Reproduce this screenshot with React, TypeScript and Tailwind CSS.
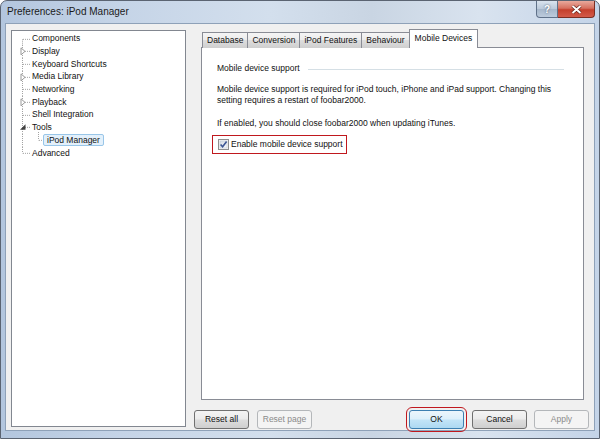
import React from 'react';

type TreeItem = {
  label: string;
  exp?: 'closed' | 'open';
  child?: boolean;
  selected?: boolean;
};

const treeItems: TreeItem[] = [
  { label: 'Components' },
  { label: 'Display', exp: 'closed' },
  { label: 'Keyboard Shortcuts' },
  { label: 'Media Library', exp: 'closed' },
  { label: 'Networking' },
  { label: 'Playback', exp: 'closed' },
  { label: 'Shell Integration' },
  { label: 'Tools', exp: 'open' },
  { label: 'iPod Manager', child: true, selected: true },
  { label: 'Advanced' },
];

const tabs = ['Database', 'Conversion', 'iPod Features', 'Behaviour', 'Mobile Devices'];

const TreeGutter = ({ item, first, last }: { item: TreeItem; first: boolean; last: boolean }) => {
  const h = 12.7;
  const mid = h / 2;
  const w = item.child ? 34 : 20;
  return (
    <svg width={w} height={h} className="shrink-0 overflow-visible">
      <line
        x1={10.5}
        y1={first ? mid : 0}
        x2={10.5}
        y2={last ? mid : h}
        stroke="#a3a3a3"
        strokeWidth={1}
        strokeDasharray="1 1"
      />
      {item.child ? (
        <>
          <line x1={26.5} y1={-2} x2={26.5} y2={mid} stroke="#a3a3a3" strokeDasharray="1 1" />
          <line x1={27} y1={mid} x2={31} y2={mid} stroke="#a3a3a3" strokeDasharray="1 1" />
        </>
      ) : (
        <line x1={11} y1={mid} x2={18} y2={mid} stroke="#a3a3a3" strokeDasharray="1 1" />
      )}
      {item.exp === 'closed' && (
        <polygon
          points={`9,${mid - 3.5} 13,${mid} 9,${mid + 3.5}`}
          fill="#ffffff"
          stroke="#9a9a9a"
          strokeWidth={1}
        />
      )}
      {item.exp === 'open' && (
        <polygon points={`13.5,${mid - 3} 13.5,${mid + 2.5} 8,${mid + 2.5}`} fill="#404040" />
      )}
    </svg>
  );
};

const CheckBox = () => (
  <svg width="11" height="11" viewBox="0 0 11 11" className="shrink-0">
    <defs>
      <linearGradient id="cbg" x1="0" y1="0" x2="1" y2="1">
        <stop offset="0" stopColor="#d6dde6" />
        <stop offset="1" stopColor="#f6f8fa" />
      </linearGradient>
    </defs>
    <rect x="0.5" y="0.5" width="10" height="10" fill="#f4f4f4" stroke="#8e8f8f" />
    <rect x="2" y="2" width="7" height="7" fill="url(#cbg)" stroke="#b9c3cf" strokeWidth="0.5" />
    <path d="M2.6 5.4 L4.6 7.8 L8.6 2.4" fill="none" stroke="#3c5593" strokeWidth="1.6" />
  </svg>
);

const Button = ({
  label,
  kind = 'normal',
  className = '',
}: {
  label: string;
  kind?: 'normal' | 'default' | 'disabled';
  className?: string;
}) => {
  const styles = {
    normal:
      'border-[#707070] text-[#111] bg-[linear-gradient(180deg,#f4f4f4_0%,#ebebeb_48%,#dddddd_52%,#cfcfcf_100%)]',
    default:
      'border-[#3c7fb1] text-[#111] bg-[linear-gradient(180deg,#ecf6fc_0%,#dcf0fb_48%,#c2e4f7_52%,#add9f2_100%)]',
    disabled: 'border-[#b4b7ba] text-[#8b8b8b] bg-[#f4f4f4]',
  }[kind];
  return (
    <div
      className={`w-[55px] h-[19px] rounded-[3px] border flex items-center justify-center text-[8.5px] leading-none ${styles} ${className}`}
    >
      {label}
    </div>
  );
};

export default function App() {
  return (
    <div className="w-[600px] h-[439px] overflow-hidden bg-white font-['Liberation_Sans',Arial,sans-serif]">
      <div className="w-full h-full flex flex-col rounded-t-[7px] border border-[#5b6472] bg-[linear-gradient(90deg,#b3c6de_0%,#c5d4e7_20%,#d3dfed_45%,#c9d5e3_62%,#d9e3ef_80%,#c4d4e8_100%)]">
        {/* title bar */}
        <div className="h-[22px] flex items-start shrink-0">
          <div className="flex-1 pl-[6px] pt-[5px] text-[10px] leading-[12px] text-[#1a1a1a]">
            Preferences: iPod Manager
          </div>
          <div className="flex mr-[4px]">
            <div className="w-[22px] h-[17px] rounded-bl-[4px] border border-t-0 border-[#5f7189] bg-[linear-gradient(180deg,#d9e3ee_0%,#bac9da_50%,#a6b7cb_52%,#bccbdc_100%)] flex items-center justify-center text-[10px] font-bold text-white [text-shadow:0_0_2px_#3a4a60]">
              ?
            </div>
            <div className="w-[37px] h-[17px] rounded-br-[4px] border border-t-0 border-l-0 border-[#7b2d22] bg-[linear-gradient(180deg,#e9a99c_0%,#d6705f_45%,#c43f2c_55%,#d35a49_100%)] flex items-center justify-center">
              <svg width="11" height="9" viewBox="0 0 11 9">
                <path d="M1.5 1 L9.5 8 M9.5 1 L1.5 8" stroke="#5a1a12" strokeWidth="3.2" />
                <path d="M1.5 1 L9.5 8 M9.5 1 L1.5 8" stroke="#ffffff" strokeWidth="2" />
              </svg>
            </div>
          </div>
        </div>

        {/* client area */}
        <div className="flex-1 mx-[4px] mb-[7px] border border-[#8ea1b8] bg-[#f0f0f0] flex pl-[5px] pt-[6px] pr-[5px] text-[8.5px] leading-[11px] text-[#111]">
          {/* tree */}
          <div className="w-[175px] h-[397px] shrink-0 border border-[#828790] bg-white pt-[1.5px]">
            {treeItems.map((item, i) => (
              <div key={item.label} className="h-[12.7px] flex items-center whitespace-nowrap">
                <TreeGutter item={item} first={i === 0} last={i === treeItems.length - 1} />
                <span
                  className={
                    item.selected
                      ? 'ml-[-3px] px-[3px] h-[12px] flex items-center border border-[#99c6e8] rounded-[2px] bg-[#e3f0fb]'
                      : ''
                  }
                >
                  {item.label}
                </span>
              </div>
            ))}
          </div>

          {/* right column */}
          <div className="ml-[8px] flex-1 flex flex-col">
            <div className="ml-[7px] w-[383px] flex flex-col">
              <div className="h-[18px] flex items-end pl-[1px] -mb-[1px] relative z-10 whitespace-nowrap">
                {tabs.map((t, i) => {
                  const sel = i === tabs.length - 1;
                  return sel ? (
                    <div
                      key={t}
                      className="-ml-[1px] h-[19px] px-[5px] border border-b-0 border-[#898c95] bg-white flex items-center pb-[1px]"
                    >
                      {t}
                    </div>
                  ) : (
                    <div
                      key={t}
                      className={`h-[16px] px-[4px] border border-b-0 border-[#898c95] flex items-center bg-[linear-gradient(180deg,#f5f5f5_0%,#ebebeb_50%,#dddddd_50%,#cfcfcf_100%)] ${i === 0 ? '' : '-ml-[1px]'}`}
                    >
                      {t}
                    </div>
                  );
                })}
              </div>
              <div className="h-[353px] border border-[#898c95] bg-white pl-[15px] pr-[19px] pt-[15px]">
                <div className="flex items-center gap-[8px] whitespace-nowrap">
                  <span>Mobile device support</span>
                  <div className="flex-1 border-t border-[#d5dfe5] mt-[1px]" />
                </div>
                <p className="mt-[10px] whitespace-nowrap">
                  Mobile device support is required for iPod touch, iPhone and iPad support. Changing this
                  <br />
                  setting requires a restart of foobar2000.
                </p>
                <p className="mt-[12px] whitespace-nowrap">
                  If enabled, you should close foobar2000 when updating iTunes.
                </p>
                <div className="mt-[6px] -ml-[5px] w-fit h-[19px] border border-[#c0181e] flex items-center gap-[2px] pl-[5px] pr-[3px] whitespace-nowrap">
                  <CheckBox />
                  <span>Enable mobile device support</span>
                </div>
              </div>
            </div>

            {/* buttons */}
            <div className="mt-[10px] flex items-center">
              <Button label="Reset all" kind="normal" />
              <Button label="Reset page" kind="disabled" className="ml-[8px]" />
              <div className="flex-1" />
              <Button
                label="OK"
                kind="default"
                className="outline outline-1 outline-[#c0181e] outline-offset-[2px]"
              />
              <Button label="Cancel" kind="normal" className="ml-[8px]" />
              <Button label="Apply" kind="disabled" className="ml-[7px]" />
            </div>
          </div>
        </div>
      </div>
    </div>
  );
}
